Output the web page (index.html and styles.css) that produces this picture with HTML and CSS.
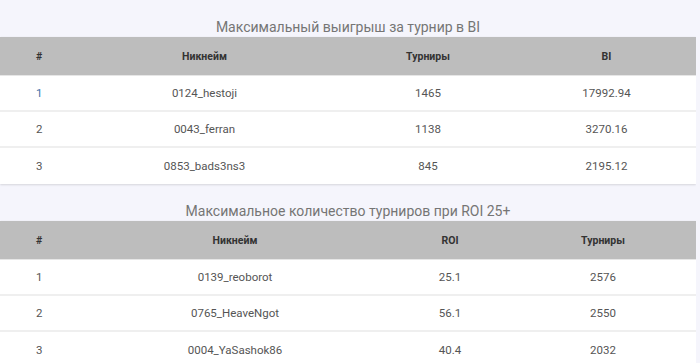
FILE: index.html
```html
<!DOCTYPE html>
<html lang="ru">
<head>
<meta charset="utf-8">
<link rel="stylesheet" href="styles.css">
</head>
<body>
<section class="block">
  <h2 class="title">Максимальный выигрыш за турнир в BI</h2>
  <table class="stats t1">
    <thead>
      <tr><th class="c-num">#</th><th class="c-nick">Никнейм</th><th class="c-a">Турниры</th><th class="c-b">BI</th></tr>
    </thead>
    <tbody>
      <tr><td class="c-num first">1</td><td>0124_hestoji</td><td>1465</td><td>17992.94</td></tr>
      <tr><td class="c-num">2</td><td>0043_ferran</td><td>1138</td><td>3270.16</td></tr>
      <tr><td class="c-num">3</td><td>0853_bads3ns3</td><td>845</td><td>2195.12</td></tr>
    </tbody>
  </table>
</section>
<section class="block">
  <h2 class="title">Максимальное количество турниров при ROI 25+</h2>
  <table class="stats t2">
    <thead>
      <tr><th class="c-num">#</th><th class="c-nick">Никнейм</th><th class="c-a">ROI</th><th class="c-b">Турниры</th></tr>
    </thead>
    <tbody>
      <tr><td class="c-num">1</td><td>0139_reoborot</td><td>25.1</td><td>2576</td></tr>
      <tr><td class="c-num">2</td><td>0765_HeaveNgot</td><td>56.1</td><td>2550</td></tr>
      <tr><td class="c-num">3</td><td>0004_YaSashok86</td><td>40.4</td><td>2032</td></tr>
    </tbody>
  </table>
</section>
</body>
</html>
```
FILE: styles.css
```css
html, body {
  margin: 0;
  padding: 0;
  background: #f5f5fc;
  font-family: Roboto, "Noto Sans", sans-serif;
}
body {
  width: 696px;
}
.block {
  padding-top: 17px;
}
.title {
  margin: 0;
  height: 20px;
  line-height: 20px;
  font-size: 14px;
  font-weight: 400;
  color: #757575;
  text-align: center;
}
.stats {
  width: 696px;
  border-collapse: collapse;
  table-layout: fixed;
  background: #fff;
  box-shadow: 0 1px 2px rgba(0,0,0,0.12), 1px 0 1px rgba(0,0,0,0.06);
}
.stats th {
  background: #bdbdbd;
  height: 38px;
  padding: 0;
  font-size: 10.5px;
  font-weight: 700;
  color: #333;
  text-align: center;
  border-bottom: 1px solid #e6e6e6;
}
.stats td {
  height: 34px;
  padding: 0;
  font-size: 11.5px;
  color: #555;
  text-align: center;
  border-bottom: 2px solid #efefef;
}
.stats tbody tr:last-child td {
  border-bottom: 0;
  height: 36px;
}
.stats .c-num {
  text-align: left;
  padding-left: 36px;
}
.stats .first {
  color: #3a6fa8;
}
.t1 .c-num { width: 34px; }
.t1 .c-nick { width: 269px; }
.t1 .c-a { width: 178px; }
.t2 .c-num { width: 44px; }
.t2 .c-nick { width: 310px; }
.t2 .c-a { width: 120px; }
```
